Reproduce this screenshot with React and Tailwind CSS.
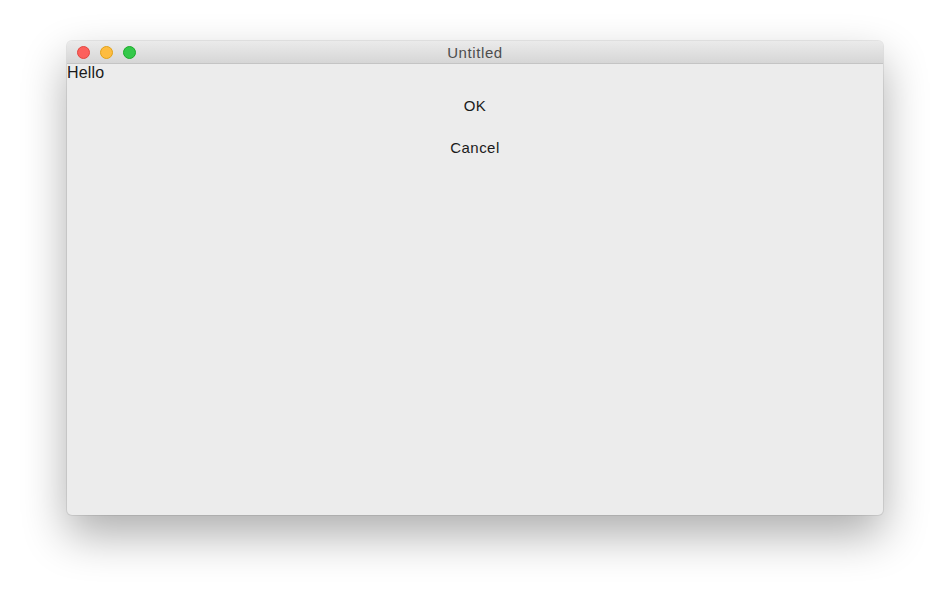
export default function App() {
  return (
    <div className="min-h-[594px] w-full bg-white pt-[41px] font-['Liberation_Sans',Arial,sans-serif]">
      <div className="mx-auto flex h-[474px] w-[816px] flex-col overflow-hidden rounded-[5px] bg-[#ececec] shadow-[0_20px_45px_rgba(0,0,0,0.32),0_0_0_1px_rgba(0,0,0,0.08)]">
        {/* Title bar */}
        <div className="relative flex h-[23px] shrink-0 items-center border-b border-[#c4c4c4] bg-gradient-to-b from-[#ebebeb] to-[#d6d6d6] pl-[10px]">
          <div className="flex items-center gap-[10px]">
            <span className="h-[13px] w-[13px] rounded-full border border-[#e2463f] bg-[#fc605c]" />
            <span className="h-[13px] w-[13px] rounded-full border border-[#e1a116] bg-[#fdbc40]" />
            <span className="h-[13px] w-[13px] rounded-full border border-[#1aab29] bg-[#34c84a]" />
          </div>
          <p className="absolute inset-x-0 top-0 text-center text-[15px] leading-[23px] tracking-[0.04em] text-[#4d4d4d]">Untitled</p>
        </div>

        {/* Content */}
        <div className="flex flex-col">
          <p className="text-[16px] leading-[18px] tracking-[0.01em] text-[#1a1a1a]">Hello</p>
          <div className="mt-[3px] flex flex-col items-center">
            <button className="h-[42px] text-[15px] tracking-[0.03em] text-[#1a1a1a]">OK</button>
            <button className="h-[42px] text-[15px] tracking-[0.03em] text-[#1a1a1a]">Cancel</button>
          </div>
        </div>
      </div>
    </div>
  )
}
